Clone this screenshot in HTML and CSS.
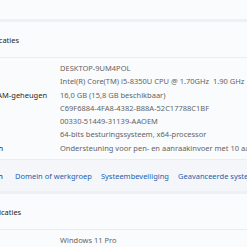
FILE: index.html
```html
<!DOCTYPE html>
<html>
<head>
    <title>Info</title>
    <link rel="stylesheet" href="styles.css">
</head>
<body>
    <div class="card-tail"></div>

    <div class="card">
        <div class="card-header">
            <span class="header-title">Apparaatspecificaties</span>
        </div>
        <div class="spec-list">
            <div class="spec-row"><span class="spec-label">Apparaatnaam</span><span class="spec-value">DESKTOP-9UM4POL</span></div>
            <div class="spec-row"><span class="spec-label">Processor</span><span class="spec-value">Intel(R) Core(TM) i5-8350U CPU @ 1.70GHz&nbsp;&nbsp;1.90 GHz</span></div>
            <div class="spec-row"><span class="spec-label">Geïnstalleerd RAM-geheugen</span><span class="spec-value">16,0 GB (15,8 GB beschikbaar)</span></div>
            <div class="spec-row"><span class="spec-label">Apparaat-id</span><span class="spec-value">C69F6884-4FA8-4382-B88A-52C17788C1BF</span></div>
            <div class="spec-row"><span class="spec-label">Product-id</span><span class="spec-value">00330-51449-31139-AAOEM</span></div>
            <div class="spec-row"><span class="spec-label">Systeemtype</span><span class="spec-value">64-bits besturingssysteem, x64-processor</span></div>
            <div class="spec-row"><span class="spec-label">Pen en aanraken</span><span class="spec-value">Ondersteuning voor pen- en aanraakinvoer met 10 aanraakpunten</span></div>
        </div>
        <div class="links-row">
            <span class="links-label">Gerelateerde koppelingen</span>
            <a class="link" href="#">Domein of werkgroep</a>
            <a class="link" href="#">Systeembeveiliging</a>
            <a class="link" href="#">Geavanceerde systeeminstellingen</a>
        </div>
    </div>

    <div class="card">
        <div class="card-header">
            <span class="header-title">Windows-specificaties</span>
        </div>
        <div class="spec-list">
            <div class="spec-row"><span class="spec-label">Editie</span><span class="spec-value">Windows 11 Pro</span></div>
        </div>
    </div>
</body>
</html>
```

FILE: styles.css
```css
body {
    margin: 0;
    width: 247px;
    height: 247px;
    overflow: hidden;
    background: #edf0f5;
    font-family: "Noto Sans", "Open Sans", sans-serif;
    font-size: 7.5px;
    color: #1f1f1f;
}

.card-tail {
    height: 19px;
    background: #fafbfd;
    margin-bottom: 3px;
}

.card {
    background: #fafbfd;
    margin-bottom: 3px;
    white-space: nowrap;
}

.card-header {
    height: 35px;
    display: flex;
    align-items: center;
    border-bottom: 1px solid #e9ecf1;
}

.header-title {
    margin-left: -56px;
}

.spec-list {
    padding: 4px 0 4px;
}

.spec-row {
    display: grid;
    grid-template-columns: 116px 1fr;
    margin-left: -56px;
    line-height: 13.3px;
}

.spec-label {
    color: #1f1f1f;
}

.spec-value {
    color: #646464;
}

.links-row {
    height: 31px;
    display: flex;
    align-items: center;
    gap: 9px;
    background: #f4f6f9;
    border-top: 1px solid #e9ecf1;
}

.links-label {
    margin-left: -89px;
    margin-right: 3px;
}

.link {
    color: #1d5fae;
    text-decoration: none;
}
```
